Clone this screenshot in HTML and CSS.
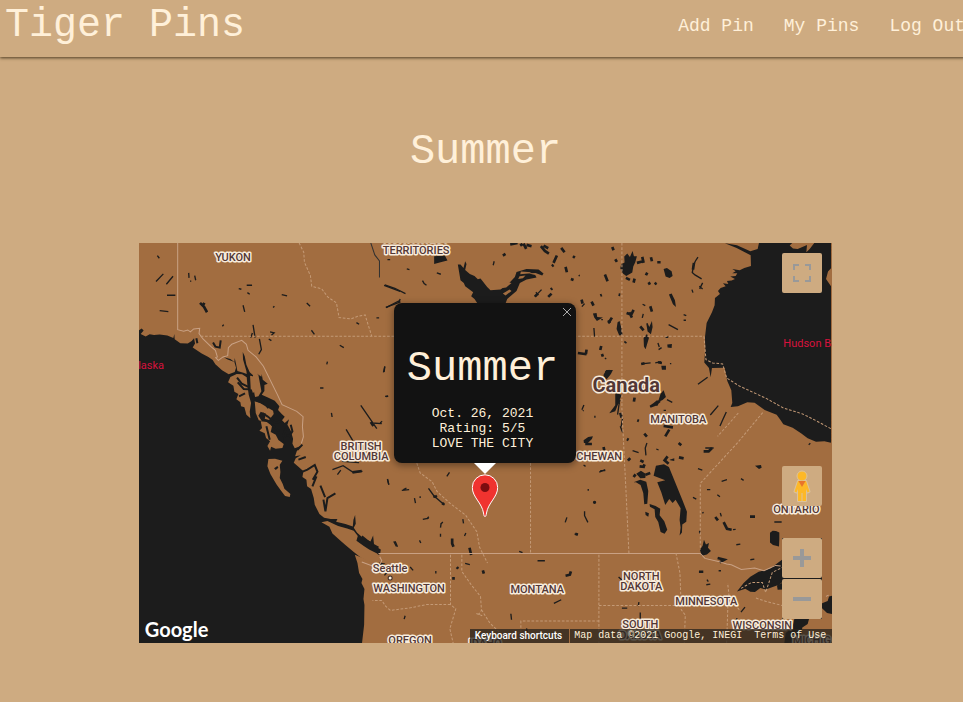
FILE: index.html
```html
<!DOCTYPE html>
<html lang="en">
<head>
<meta charset="utf-8">
<meta name="viewport" content="width=device-width, initial-scale=1">
<title>Tiger Pins</title>
<link rel="stylesheet" href="styles.css">
</head>
<body>
<header class="topbar">
  <a class="brand" href="#">Tiger Pins</a>
  <nav class="links">
    <a href="#">Add Pin</a>
    <a href="#">My Pins</a>
    <a href="#">Log Out</a>
  </nav>
</header>
<main class="page">
  <h1 class="title">Summer</h1>
  <section class="map" aria-label="Map">
    <svg class="terrain" viewBox="0 0 693 400" preserveAspectRatio="xMidYMid slice">
      <g transform="scale(.333333)">
        <!-- Pacific coast -->
        <path class="water" d="M0 262l8-5 6 6-9 10 15 8 12-7 13 2 17-1 23 3 18 7 3-12 1 16 17 12 22 1 12-8 7-8 3 16-7 12 27 18 20 10 13 9 8 13 20 18 20 12 18-7 4-13-5-17-20-7-12-7 20 5 12 9 1-12 4 18 4 21 18 5 10 4-1-9-10-34-1-23 6 13 5 25 10 23 10 9-2 23 8 42 10-2 9-15-4-22-5-27-6-5 15 10 1-8 3 17 15 12-10 4 0 18-8 11 20 9 19 9 14 17-4 11 11 12 9 8-8 11 8 8 13-11-5 16 10 18 7 24-2 15 7 14 20-8-14 17-5 15 17-3-15 9-6 13 14 12 15 14-3 17 12 8 2 20 12 8 8 27 3 20 14 28 14 11 20 4 20 0-4 8 28 7 22 7 2-20 5-14 2 26-6 12 10 15 18 16 22 10 8-18 3 30 20 12-2 14-12 5 12 20 16 3-10 7-50-20-32-13 8 25 5 30 10 18-3 12 9 18-3 30 3 18-1 60-7 60H0z"/>
        <path class="land" d="M274 402l19-9 16 1 14 9 2 24 4 28 7 25-4 26 2 20-12-11-6-22-10-3-2-12-12-9 6-16-12-7-3-18-16-10zM333 398l8 2 6 8 7 18-5 16-10 12-4-16zM347 475l16 5 16 10 10 10-10 12-14-6-7 12 10 16-9-2-9-22zM388 495l14 8 2 10-14 18-13-4 3-14zM365 535l18 2 16 12-4 18 15 8 8 16 16 12-4 12-20 2-14-6-3 12-8-14 8-14-12-10-4-14-16-8 8-8zM388 648l20-1 22 6-8 12 2 22-2 18 9 18 5 14 18 16-2 9-14-3-12-16-14-19-18-31-9-23zM547 838l18-4 32 15 27 7 20 7 12 16-4 14 22 16 16 10 24 12 12 16-8 20-12-3-18-9-22-11-22-17-26-22-18-16-20-18-9-20z"/>
        <path class="channel" d="M294 404l14 18 20 10M296 418l18 20 14 1M300 460l18-9M335 440l10 30 28 10M370 510l15 10 25 20 18-6M382 550l10 40M398 545l22 20M455 545l5 20-9 14-8-2M445 550l-12 22 5 28M172 286l3 15M222 299l7 12 13 3 3-22M490 605l-15 15M478 650l22-8M485 688l20-8 22-14 8 20-14 24M520 730l12-30M553 770l6 35 6-40 24-14M544 728l14 34M668 880l28 22 22 12"/>
        <path class="water" d="M405 676l10-7 3 5-8 7z"/>
        <!-- northern lakes -->
        <g class="lake">
          <path d="M55 38l6 8M51 116l22-23M82 124l20-24M84 157h25M62 203l26 3M149 90l1 15M167 98l3 14M154 113l2 3M299 137l8 2M323 127h16M325 149l7 5M312 187l5 20M402 194l4-4M428 155l16 4M503 180l10 10M517 262l9 12M389 288l8 5M393 267l12 3-8 7M342 246l6 38M340 270l-5 14M361 288l6 32-8 14M250 250l4-5M652 239l8 5M602 307l12 7M563 364l2-8M543 435h10M735 387l2-16M740 461l7-1M577 510l2 12M712 225h8M735 127l48 18M740 193l44-16M665 487l48 70M700 540l28 2M621 559l20 34M745 50h8M580 680l32-12 30 20 28-3M595 695l10-14M610 655l50 4M745 709l4 16M768 895l7 16M736 997l8-10"/>
          <path class="wide" d="M183 180l12 12 9 16M190 190l6-10M640 688l28-4M695 537l8 12"/>
        </g>
        <g transform="translate(723 0)">
          <path class="water" d="M233 65l8 0 9 10 5-20 4 8-4 18 14 12 14 6 10 10 8-2 20 25 10 10 30-2 6-5 20-15 17-18 5-15 30-9 36 2 15 12-4 6-20-8-23 1 22 5 4 8-30 6-20 10-10 24-28 24-5 14-12 0-9 20H257l2-14 4-6 28-2-8-12-10-8 6-12-24-18-4-10-10-8zM162 40l32-2 8 15-18 4-22 6zM638 212l11-2 2 12 17 2-18 10-8-10zM675 384l12-4 0 18-14 8zM610 592l14-10 14-2-3 8-12 12h-12z"/>
          <path class="land" d="M362 136l20-18 12 2-16 14zM368 152l20-12 6 4-18 14zM422 86l32 2-10 4-24 2zM418 100l18-2-8 8-14 2z"/>
          <g class="lake">
            <path d="M14 126l30 10 32 16M18 194l42-22M60 168l-3 9M80 78l8 2M170 90l12 4M127 113l5 9 7 5M342 55l-3 12M464 161l20-21M467 148l8 8M596 96l2 4M613 182l-8 9M641 255l2 26M605 500l6-14M608 504l2-2M644 518v6M10 388l4-18M15 460l9-1M0 540l6-5"/>
            <path class="wide" d="M390 5l22-5M368 38l8-5M420 8l7-5M439 6l15 4M430 2l8 16M482 10l12 14 12 8M490 8l14 8M543 15l10 13M530 38l-10 22M515 70l5-4M464 161l8-8M504 162l10-10M512 140l4-4M556 72l4 16M578 40l6 4M572 108l8 3M604 170l3 12M634 176l6 12M685 232l3 9M593 330l26 4M617 333l2-13M663 309l-3 12M665 333l3 8"/>
          </g>
        </g>
        <!-- Hudson Bay and James Bay -->
        <g transform="translate(1383 0)">
          <path class="water" d="M476 0l-4 18-22 7-40-18-36-6 35 14 42 22 1 32-20 6-14 7-22-4 10 7-10 6 15 0-5 8-16 2 14 7-10 5-14 1 4 9-16-2 8 9-15 5-8 9 6 9-15 12-1 22-8 21-16 32-5 43 1 34-3 42 14 16 5 28 4-28 38-1 8 40 12 28 3 38-5 12 22-2 28-12 22 1 30 22 36 14 12 17 8 12 28 10 25 17 20 15 25 10 25-1 20 4V130l-15-22 6-22 9-10V0h-50l-14 18-10 10 2-22-28 12-14-1-10-9 8-8z"/>
          <path class="water" d="M63 64l10-5-1-18 9-9 8 10 8-18 4 16 9 0-5 18-6 13-3 18-18 10-10-7-8-16zM190 78l10-3 14 10 3 14-9 6-12-4zM206 155l8-3 10 20 3 20-9-8zM52 238l6-4 6 24 3 18-10 2-8-20zM142 240l5 12 8-18 2 18-5 22-10-8-4-24zM130 285l10-12 6 12-10 34-5-8zM10 395l8-14 20 0-6 12-12 15-10 7zM45 450l20 5-6 14-4 11-10 25-18 6 18-24zM181 452l9-10 7 20-10 9-8 4-8 14-10-2 14-16zM148 488l12-8 10-8 12 4-15 12-16 6zM183 368h14v12h-12zM201 305l14-2-1 12-12-1z"/>
          <g class="lake">
            <path class="wide" d="M36 12l4 10M45 49l5 8M77 105l12 6M110 60l16-4M126 42l4 18M14 95l8 20M25 240l10-16M79 210l14 5 7-14M87 208l8 16M120 250l10 12M150 190l5 16M103 107l-3 12M145 118l4 7M137 97l4-8M152 43l3 12M171 58h10M163 124l6-4M281 60l-3 20M123 363l10-2M173 358l12 2M200 280v5M0 158l5-2M55 155l5 1M74 300l3-4M57 470l-3 12M103 464l-2 12M60 510l4 14M111 532l5 2M190 549l28 4M207 560l-12 20M132 572l8 9M80 588l5 3"/>
            <path d="M293 43l-8 12-5 12-4 22 8 7 20 12M307 120l-9 18M275 140l3 9M297 130l10 8M250 215l8 3M250 232h7M205 245l28 15M129 213l-3 12M127 184l8 4M173 300l4 12M175 320l9-6M123 363l28-3M165 360l17-4M211 360v4M293 424l29-21M354 488l-24 28M378 507l-10 22-9 20M57 480l-5 35M67 525l-4 25M60 550l7 18M200 470l16 8M3 230h5M14 345l4 3M190 502h7"/>
          </g>
        </g>
        <!-- southern interior -->
        <g class="lake" transform="translate(723 600)">
          <path d="M22 108l4 17M65 142l22-2M70 140l9-5M103 165l3 15M120 160v5M145 136l16 22 32 28M200 100l8-12M128 229l18-4M140 228l6-7M183 240l-2 14M181 272v9M183 242l5-5M248 228l2 13M257 270l-4 9M41 295l8 15M118 292l4 8M90 372l9 10M167 384v7M72 528l3-10M255 361l14 4M417 325l10 4M472 353h22M521 481l22-11M392 512l2 18M555 238l5-15M613 205v13l10 20M657 87l18-7M624 138v5M610 66l6 4M583 273h10M439 556l2 10"/>
          <path class="wide" d="M216 286v15l4 10M268 314l5 22M230 372l4 5M220 402v8M308 382l3 10M556 398l13-3 3-10M165 158l4 5M186 180l6 4M615 3h20M670 12l2 10M585 272l8 3"/>
          <circle cx="643" cy="178" r="3"/><circle cx="163" cy="161" r="2"/>
        </g>
        <!-- Manitoba and the Great Lakes -->
        <g transform="translate(1383 600)">
          <path class="water" d="M160 98l7-30 24-4 15 8 18 44 22 54 14 36-2 30-12 8-1 24-7 9 3-24-3-22 3-35-15-26-9 10-10-12-12 18-12-38-12-30 24-6zM108 92l14-9 15 10-2 12-15 1zM100 118l20-8 18 6 6 28-3 38-9 2-3-34-8-24-14-8zM148 183l18 6 14 8-2 20 14 18 9 25-8 12-12-5-7-30-9-15-2-23-14-8zM135 206l11 5-2 10-8-5zM509 269l8-6 10 1 10 4v20l-1 22-18-4-9-8zM299 320l8-12 4-18 6 14 9-4-3 14 9 10-12 10-16 4zM410 445l20-25 20-19 25-15 15-4 20-6 20-15 24-18v68l-18 14-40 14-16-4-16 12-14-1-15-9zM545 420l-15 8 2 12 15-1zM552 600l4-30 20-16 6-26h44l-4 15-16 10-8 45zM667 480l15-6 4-14 10-2v55l-16-3-14-14-12-9zM464 68l18-2 2 8-8 4zM208 50l14-4 0 8-12-2z"/>
          <g class="lake">
            <path class="wide" d="M120 52l10 5M133 64l-4 9M118 70l16 2M150 90l-14 5M310 25l15 0 10-10M236 43l14 3M202 40l-9 12 12 10M370 237l10 20 14 3M352 345l20 5-14 8M345 222l8 10M83 53l7-8M106 94l-6 8M235 0l8 7M449 221l15 0M296 386l13 0"/>
            <path d="M97 23l18 6M140 0l-5 15 2 22M168 18l7 3M315 15l25 0M293 77l13 4M278 163l10 5M351 155l8 6M364 115l16-5M422 107l8 5M320 140l10 0M306 210l4-2M360 210l3 10M522 237l22 0M398 260l8-1M408 305l12-2M450 350l12-2M298 263v8M355 383l7 0M318 425l12-2M320 410l4 6M116 477l-2 12M65 495h16M120 508v18M55 402l10 9M434 492l-12 15M410 525l-3 14M625 5l5-4M0 83h15"/>
          </g>
        </g>
        <!-- borders -->
        <path class="border" d="M116 0v260l18 5 12-4 8 6 10-9 18-2-2 16 12 16 23 22 14 12 6 20-5 2 8 8 14-10 14-4 2-24 10-10 30-12 14 12 5 18 24 20 22 28 42 85 14 30 44 20 19 16-2 30 3 30-6 20M718 931H1683l14 15 40 9 25 8 14 2 30 14 40-4 28 8 35-16 15 2M2060 1060l8-4M668 957l32 12 20-2 8-14-6-12"/>
        <path class="border dark" d="M695 0l12 36 14 18v50"/>
        <g class="dashes">
          <path d="M480 0l14 28 2 30 18 40 4 32 30 8 18 24 26 18 8 44 36 4 20-8 22-4 8 26 12 38M185 280H1694M1448 0v500l12 240 9 190M1174 660V930M833 660l10 30 36 26 15 30 40 36 45 34 34 50 8 46 24 48M934 935v150l16 12-18 60 10 43M968 935v50l28 40 28 35 3 42-8 10 10 6-20-8M934 1084h-70l-50 10-60 8-14-12-12-18-28 0M1027 1100l25 40 38 36 55-8v-34h234M1379 935v265M1379 1087h234M1610 930l12 60 4 110 12 16-3 84M1797 510l-62 70M1795 599l-112 122V921M1694 280l6 70 20 10 30 3 12 42 38 24 82 38 50 28 58 18 40 20 48 26M1870 509l-75 90M1762 1200l4-120M1800 1100l-30-35-5-45M1850 1065l30 10 48 12M1805 1036l32-18 32 0 10 30 20-60 50-25"/>
        </g>
      </g>
      <g class="labels">
        <text x="277" y="-1">NORTHWEST</text>
        <text x="94" y="18">YUKON</text>
        <text x="277" y="11">TERRITORIES</text>
        <text x="539" y="180">MANITOBA</text>
        <text x="222" y="207">BRITISH</text>
        <text x="222" y="217">COLUMBIA</text>
        <text x="460" y="217">CHEWAN</text>
        <text x="657" y="270">ONTARIO</text>
        <text x="251" y="329">Seattle</text>
        <text x="270" y="349">WASHINGTON</text>
        <text x="398" y="350">MONTANA</text>
        <text x="502" y="337">NORTH</text>
        <text x="502" y="347">DAKOTA</text>
        <text x="567" y="362">MINNESOTA</text>
        <text x="623" y="386">WISCONSIN</text>
        <text x="501" y="385">SOUTH</text>
        <text x="501" y="396">DAKOTA</text>
        <text x="271" y="401">OREGON</text>
        <text x="346" y="404">IDAHO</text>
        <text x="680" y="401">MICHIGAN</text>
        <text class="country" x="487" y="149">Canada</text>
        <text class="sea" x="-8" y="126">Alaska</text>
        <text class="sea" x="644" y="104">Hudson Bay</text>
      </g>
      <circle cx="251" cy="335" r="2" fill="#fff0dc" stroke="#3b2b25"/>
    </svg>

    <article class="info">
      <button class="close" type="button" aria-label="Close">
        <svg viewBox="0 0 10 10"><path d="M1 1l8 8M9 1L1 9"/></svg>
      </button>
      <h2 class="title">Summer</h2>
      <p>Oct. 26, 2021<br>Rating: 5/5<br>LOVE THE CITY</p>
    </article>
    <svg class="pin" viewBox="0 0 27 43"><path d="M13.500 42.500c-1 0-1.200-1.500-1.500-3.500C10.500 29 .8 23 .8 13.500a12.700 12.700 0 0 1 25.400 0C26.200 23 16.500 29 15 39c-.3 2-.5 3.500-1.500 3.500z" fill="#f0332f" stroke="#fff"/><circle cx="13.500" cy="13.500" r="4.500" fill="#7c0d10"/></svg>

    <button class="control full" type="button" aria-label="Toggle fullscreen"><svg viewBox="0 0 18 18"><path fill="#999" d="M0 0v6h2V2h4V0zM12 0v2h4v4h2V0zM0 12v6h6v-2H2v-4zM16 12v4h-4v2h6v-6z"/></svg></button>
    <div class="side">
      <button class="control" type="button" aria-label="Street View"><svg class="person" viewBox="0 0 18 32"><path d="M5 11L1.500 21.500l2 1L5 19v12h3.500v-8h1v8H13V19l1.500 3.500 2-1L13 11z" fill="#fdb827" stroke="#dcc29b" stroke-width="2" stroke-linejoin="round" paint-order="stroke"/><circle cx="9" cy="6" r="5" fill="#fdb827" stroke="#dcc29b"/><path d="M5.500 11h7L9 17z" fill="#e8742c"/></svg></button>
      <div class="zoom">
        <button class="control" type="button" aria-label="Zoom in"><svg viewBox="0 0 18 18"><path fill="#999" d="M7 0h4v7h7v4h-7v7H7v-7H0V7h7z"/></svg></button>
        <button class="control" type="button" aria-label="Zoom out"><svg viewBox="0 0 18 18"><path fill="#999" d="M0 7h18v4H0z"/></svg></button>
      </div>
    </div>
    <a class="logo" href="#">Google</a>
    <footer class="legal">
      <button type="button">Keyboard shortcuts</button>
      <span>Map data ©2021 Google, INEGI</span>
      <a href="#">Terms of Use</a>
    </footer>
  </section>
</main>
</body>
</html>
```
FILE: styles.css
```css
* {
  box-sizing: border-box;
}

html {
  overflow-x: hidden;
}

body {
  margin: 0;
  background: #ceab81;
  color: #fff0d9;
  font-family: "Courier New", "Liberation Mono", monospace;
}

a {
  color: inherit;
  text-decoration: none;
}

button {
  padding: 0;
  border: 0;
  font: inherit;
  color: inherit;
  cursor: pointer;
}

.topbar {
  display: flex;
  justify-content: space-between;
  align-items: center;
  padding: 3px 0 9px 5px;
  margin-right: -2px;
  box-shadow: 0 1px 3px #4d3c22;
}

.brand {
  font-size: 40px;
  line-height: 45px;
}

.links {
  display: flex;
  gap: 30px;
  font-size: 18px;
  line-height: 20px;
  white-space: nowrap;
}

.page {
  width: 100%;
  margin-left: 4px;
  padding: 71px 0 59px;
}

.title {
  margin: 0;
  font-size: 42px;
  font-weight: 400;
  line-height: 48px;
  text-align: center;
}

.map {
  position: relative;
  width: 72%;
  height: 400px;
  margin: 67px auto 0;
  overflow: hidden;
  background: #a26d40;
}

.terrain {
  display: block;
  width: 100%;
  height: 100%;
}

.water {
  fill: #1c1c1c;
}

.land {
  fill: #a26d40;
}

.lake {
  fill: #1c1c1c;
  stroke: #1c1c1c;
  stroke-width: 4;
}

.lake path {
  fill: none;
}

.lake .wide {
  stroke-width: 8;
}

.channel {
  fill: none;
  stroke: #1c1c1c;
  stroke-width: 6;
}

.border {
  fill: none;
  stroke: #c9a184;
  stroke-width: 3;
}

.border.dark {
  stroke: #303030;
}

.dashes {
  fill: none;
  stroke: #c49a76;
  stroke-width: 3;
  stroke-dasharray: 8 5;
}

.labels {
  font-family: Roboto, sans-serif;
  font-size: 11px;
  font-weight: 500;
  text-anchor: middle;
  fill: #523735;
  stroke: #f8ecdc;
  stroke-width: 3px;
  stroke-linejoin: round;
  paint-order: stroke;
}

.labels .country {
  font-size: 20px;
  font-weight: 700;
}

.labels .sea {
  fill: #d8123c;
  stroke: none;
  font-weight: 400;
  text-anchor: start;
}

.info {
  position: absolute;
  left: 50%;
  bottom: 180px;
  width: 182px;
  padding: 42px 18px 12px 12px;
  transform: translateX(-50%);
  border-radius: 8px;
  background: #121212;
  box-shadow: 0 2px 7px 1px rgba(0, 0, 0, .35);
  text-align: center;
}

.info::after {
  content: "";
  position: absolute;
  top: 100%;
  left: 50%;
  transform: translateX(-50%);
  border: 11px solid transparent;
  border-top-color: #fff;
  border-bottom: 0;
}

.info p {
  margin: 13px 0 0;
  font-size: 13px;
  line-height: 15px;
}

.close {
  position: absolute;
  top: 4px;
  right: 4px;
  width: 10px;
  height: 10px;
  background: none;
}

.close svg {
  display: block;
  fill: none;
  stroke: #aaa;
}

.pin {
  position: absolute;
  left: 50%;
  top: 231px;
  width: 27px;
  height: 43px;
  transform: translateX(-50%);
}

.control {
  display: grid;
  place-items: center;
  width: 40px;
  height: 40px;
  border-radius: 2px;
  background: #ceab81;
}

.control svg {
  width: 18px;
  height: 18px;
}

.control .person {
  height: 32px;
}

.full {
  position: absolute;
  top: 10px;
  right: 10px;
}

.side {
  position: absolute;
  right: 10px;
  bottom: 24px;
  display: grid;
  gap: 32px;
}

.zoom {
  display: grid;
  gap: 1px;
  background: #1c1c1c;
}

.logo {
  position: absolute;
  left: 6px;
  bottom: 1px;
  color: #fff;
  font-family: Lato, sans-serif;
  font-size: 20px;
  font-weight: 700;
  line-height: 26px;
}

.legal {
  position: absolute;
  right: 0;
  bottom: 0;
  display: flex;
  background: rgba(40, 34, 28, .76);
  font-size: 10px;
  line-height: 14px;
  white-space: nowrap;
}

.legal button {
  padding: 0 7px 0 5px;
  border-right: 1px solid #a26d40;
  background: none;
  color: #fff;
  font-family: Roboto, sans-serif;
  font-weight: 500;
}

.legal span {
  padding: 0 6px 0 4px;
}

.legal a {
  padding: 0 6px;
}
```
